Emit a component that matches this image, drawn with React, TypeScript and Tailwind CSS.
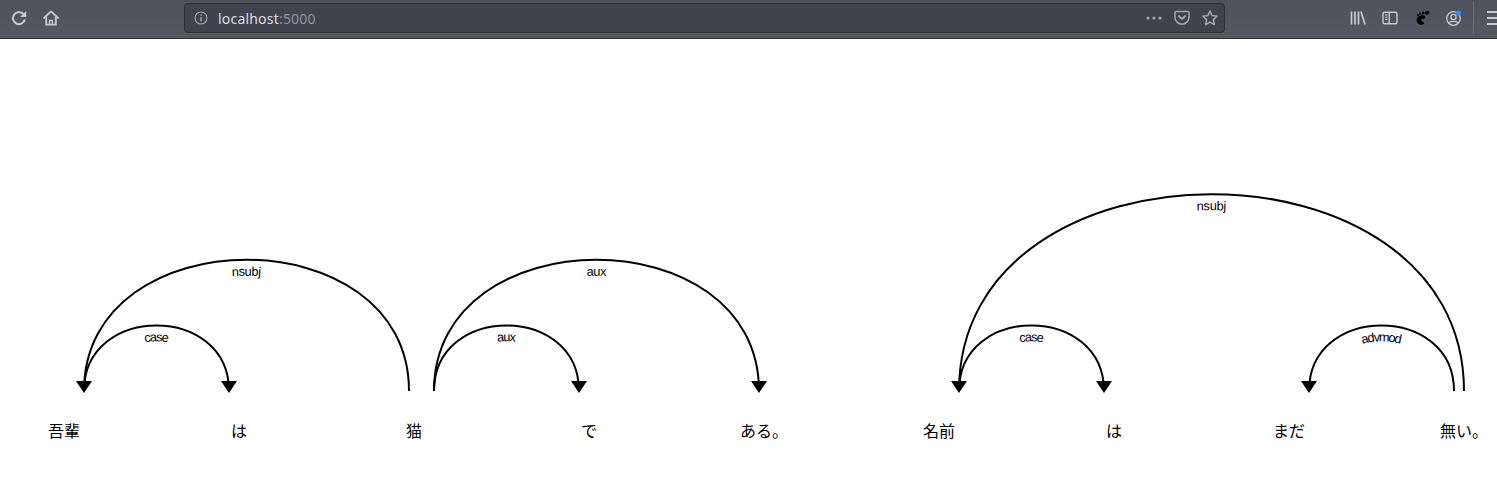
const words = [
  { text: '吾輩', x: 64 },
  { text: 'は', x: 239 },
  { text: '猫', x: 414 },
  { text: 'で', x: 589 },
  { text: 'ある。', x: 764 },
  { text: '名前', x: 939 },
  { text: 'は', x: 1114 },
  { text: 'まだ', x: 1289 },
  { text: '無い。', x: 1464 },
];

// start/end are always left to right, the arrow sits on one of the ends
const arcs = [
  { id: 'arc-0', label: 'case', start: 84, end: 229, arrow: 229, level: 1 },
  { id: 'arc-1', label: 'nsubj', start: 84, end: 409, arrow: 84, level: 2 },
  { id: 'arc-2', label: 'aux', start: 434, end: 579, arrow: 579, level: 1 },
  { id: 'arc-3', label: 'aux', start: 434, end: 759, arrow: 759, level: 2 },
  { id: 'arc-4', label: 'case', start: 959, end: 1104, arrow: 1104, level: 1 },
  { id: 'arc-5', label: 'nsubj', start: 959, end: 1464, arrow: 959, level: 3 },
  { id: 'arc-6', label: 'advmod', start: 1309, end: 1454, arrow: 1309, level: 1 },
];

const BASE_Y = 391;

function arcPath(start: number, end: number, level: number) {
  const c = 87.5 * level;
  return `M${start},${BASE_Y} C${start},${BASE_Y - c} ${end},${BASE_Y - c} ${end},${BASE_Y}`;
}

function ToolbarButton({ children }: { children: React.ReactNode }) {
  return <div className="flex h-8 w-8 shrink-0 items-center justify-center">{children}</div>;
}

function Toolbar() {
  return (
    <div className="flex h-[39px] items-center overflow-hidden border-b border-[#2b2d33] bg-gradient-to-b from-[#4f525c] to-[#555862] pb-[3px] pl-[3px]">
      <ToolbarButton>
        <svg width="16" height="16" viewBox="0 0 16 16" fill="none" stroke="#c9cacf" strokeWidth="2">
          <path d="M13.8 9.5A6 6 0 1 1 11.6 3.4L13.4 5.2" />
          <path d="M15.2 1V7H9.2Z" fill="#c9cacf" stroke="none" />
        </svg>
      </ToolbarButton>
      <ToolbarButton>
        <svg width="16" height="16" viewBox="0 0 16 16" fill="none" stroke="#c9cacf" strokeWidth="1.8">
          <path d="M1 8 8 1.4 15 8" strokeLinejoin="round" strokeLinecap="round" />
          <path d="M3.2 7V14.6H12.8V7" />
          <path d="M6.6 14.6V10.4H9.4V14.6" strokeWidth="1.4" />
        </svg>
      </ToolbarButton>

      <div className="ml-[117px] mt-[1px] flex h-[30px] w-[1041px] shrink-0 items-center rounded-[4px] border border-[#2e3138] bg-[#3f434e] pl-[9px] pr-[6px] font-['Noto_Sans',sans-serif] text-[14px]">
        <svg width="14" height="14" viewBox="0 0 14 14" fill="none" stroke="#a4a6ac" strokeWidth="1.1">
          <circle cx="7" cy="7" r="6" />
          <path d="M7 6V10.4" strokeWidth="1.4" />
          <path d="M7 3.4V5" strokeWidth="1.4" />
        </svg>
        <div className="ml-[10px] tracking-[0.2px] text-[#dcdde1]">
          localhost<span className="text-[#92949b]">:5000</span>
        </div>
        <div className="ml-auto flex items-center">
          <svg width="16" height="4" viewBox="0 0 16 4" fill="#a4a6ac">
            <circle cx="2" cy="2" r="1.6" />
            <circle cx="8" cy="2" r="1.6" />
            <circle cx="14" cy="2" r="1.6" />
          </svg>
          <svg className="ml-[12px]" width="16" height="16" viewBox="0 0 16 16" fill="none" stroke="#a4a6ac" strokeWidth="1.5">
            <path d="M1 2.4Q1 1.4 2 1.4H14Q15 1.4 15 2.4V7.2A7 7 0 0 1 1 7.2Z" />
            <path d="M4.8 6 8 9 11.2 6" strokeLinecap="round" strokeWidth="1.8" />
          </svg>
          <svg className="ml-[12px]" width="16" height="16" viewBox="0 0 16 16" fill="none" stroke="#a4a6ac" strokeWidth="1.5">
            <path d="M8 1 10.1 5.6 15 6.2 11.4 9.6 12.4 14.6 8 12.1 3.6 14.6 4.6 9.6 1 6.2 5.9 5.6Z" strokeLinejoin="round" />
          </svg>
        </div>
      </div>

      <div className="ml-[117px] flex shrink-0 items-center">
        <ToolbarButton>
          <svg width="16" height="16" viewBox="0 0 16 16" fill="none" stroke="#c9cacf" strokeWidth="1.7">
            <path d="M1.5 1.5V14.5M5 1.5V14.5M8.5 1.5V14.5M11 1.5 15 14.5" />
          </svg>
        </ToolbarButton>
        <ToolbarButton>
          <svg width="16" height="16" viewBox="0 0 16 16" fill="none" stroke="#c9cacf" strokeWidth="1.4">
            <rect x="1" y="2.2" width="14" height="11.6" rx="1.6" />
            <path d="M7.2 2.2V13.8" />
            <path d="M3 5H5.4M3 7.2H5.4M3 9.4H5.4" strokeWidth="1.1" />
          </svg>
        </ToolbarButton>
        <ToolbarButton>
          <svg width="16" height="16" viewBox="0 0 16 16" fill="#000000">
            <path d="M10 5.4C6.4 4.6 2.4 7 2.6 10.6C2.8 13.6 6 15.6 8.6 14.6C10.4 13.8 10.4 12.4 9.2 12C7.6 11.6 6.8 10.6 7.4 9.6C8.2 8.6 10 8.8 11 8C11.8 7 11.2 5.8 10 5.4Z" />
            <ellipse cx="13" cy="2.8" rx="2.4" ry="1.7" transform="rotate(-20 13 2.8)" />
            <ellipse cx="9.2" cy="3" rx="1.3" ry="1.6" />
            <ellipse cx="6.4" cy="3.8" rx="1" ry="1.3" />
            <ellipse cx="4" cy="5.4" rx="0.9" ry="1.1" />
          </svg>
        </ToolbarButton>
        <ToolbarButton>
          <svg width="18" height="18" viewBox="0 0 18 18" fill="none" stroke="#c9cacf" strokeWidth="1.3">
            <circle cx="8.5" cy="9.5" r="6.8" />
            <circle cx="8.5" cy="8" r="2.6" />
            <path d="M3.8 14C5 11.8 12 11.8 13.2 14" />
            <circle cx="13.5" cy="4" r="2.6" fill="#2f8ff5" stroke="none" />
          </svg>
        </ToolbarButton>
        <div className="ml-[3px] h-[32px] w-px bg-[#6c6f78]" />
        <div className="ml-[13px] flex w-3 flex-col gap-[4px]">
          <div className="h-[2px] w-full bg-[#c9cacf]" />
          <div className="h-[2px] w-full bg-[#c9cacf]" />
          <div className="h-[2px] w-full bg-[#c9cacf]" />
        </div>
      </div>
    </div>
  );
}

function Diagram() {
  return (
    <svg className="block h-[451px] w-full bg-white" viewBox="0 39 1497 451">
      {words.map((word) => (
        <text
          key={word.x}
          x={word.x}
          y="437"
          textAnchor="middle"
          className="fill-black font-['Liberation_Sans','Noto_Sans_CJK_JP',sans-serif] text-[16px]"
        >
          {word.text}
        </text>
      ))}
      {arcs.map((arc) => (
        <g key={arc.id}>
          <path id={arc.id} d={arcPath(arc.start, arc.end, arc.level)} fill="none" stroke="#000000" strokeWidth="2" />
          <text dy="16" className="fill-black font-['Liberation_Sans',sans-serif] text-[12.8px]">
            <textPath href={`#${arc.id}`} startOffset="50%" textAnchor="middle">
              {arc.label}
            </textPath>
          </text>
          <path d={`M${arc.arrow},393 L${arc.arrow - 8},381 L${arc.arrow + 8},381 Z`} fill="#000000" />
        </g>
      ))}
    </svg>
  );
}

export default function App() {
  return (
    <div className="h-[490px] w-[1497px] overflow-hidden bg-white">
      <Toolbar />
      <Diagram />
    </div>
  );
}
